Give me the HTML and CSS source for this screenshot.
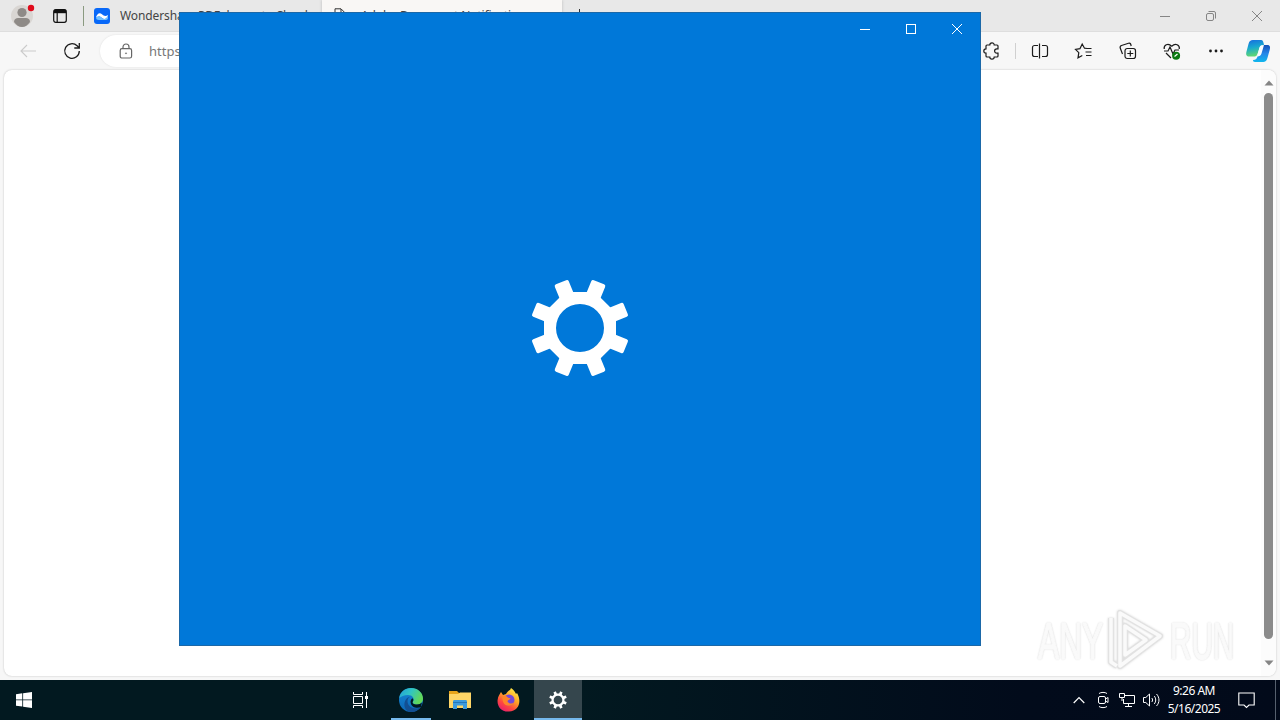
FILE: index.html
```html
<!DOCTYPE html>
<html lang="en">
<head>
<meta charset="utf-8">
<title>Desktop</title>
<link rel="stylesheet" href="styles.css">
</head>
<body>
<div class="desktop">
  <div class="browser">
    <div class="tabbar">
      <svg class="profile" width="26" height="28" viewBox="0 0 26 28"><circle cx="12" cy="16" r="11" fill="#d9d6d3"/><circle cx="12" cy="12.5" r="4.6" fill="#8e8a87"/><path d="M4 22c0-3 2-4 4-4h8c2 0 4 1 4 4-2 3-5 5-8 5s-6-2-8-5z" fill="#8e8a87"/><circle cx="21" cy="8" r="3.2" fill="#e00b1c"/></svg>
      <svg class="tabmenu" width="14" height="14" viewBox="0 0 14 14" fill="none" stroke="#111" stroke-width="1.2"><rect x=".7" y=".7" width="12.6" height="12.6" rx="2"/><path d="M1 2.5h12" stroke-width="3.4"/><path d="M4.2 4v9"/></svg>
      <span class="divider"></span>
      <svg class="favicon" width="16" height="16" viewBox="0 0 16 16"><rect width="16" height="16" rx="3" fill="#0868f8"/><path d="M2 9.500C3 5.500 5.500 4 8 6.200c2 1.800 3.500 2.300 6 .8-.5 3.500-3.500 5-6 3-2-1.600-3.500-2-6-.5z" fill="#fff"/><path d="M8 10c2.500 2 5.500.5 6-3v3c0 1.200-1 2-2 2H5c-2 0-3-.8-3-2.500 2.500-1.500 4-1.100 6 .5z" fill="#6fc0ff"/></svg>
      <span class="tabtitle first">Wondershare PDFelement - Cloud</span>
      <div class="activetab">
        <svg width="12" height="15" viewBox="0 0 12 15" fill="none" stroke="#333"><path d="M1 .8h6l4 4v9.500H1zM7 1v4h4"/></svg>
        <span class="tabtitle">Adobe Document Notification</span>
      </div>
      <svg class="newtab" width="12" height="14" viewBox="0 0 12 14" stroke="#333"><path d="M6.500 0v14M0 7.500h12"/></svg>
      <div class="syscaption">
        <svg width="12" height="12" viewBox="0 0 12 12" fill="none" stroke="#858585"><path d="M1 6.500h10"/></svg>
        <svg width="12" height="12" viewBox="0 0 12 12" fill="none" stroke="#858585"><rect x="1.500" y="3.500" width="7" height="7" rx="1.500"/><path d="M3.500 1.500H9a1.500 1.500 0 0 1 1.500 1.500v5.500"/></svg>
        <svg width="12" height="12" viewBox="0 0 12 12" fill="none" stroke="#858585"><path d="M1 1l10 10M11 1L1 11"/></svg>
      </div>
    </div>
    <div class="toolbar">
      <svg class="back" width="16" height="14" viewBox="0 0 16 14" fill="none" stroke="#cbcbcb" stroke-width="1.100"><path d="M16 7H1M7 1L1 7l6 6"/></svg>
      <svg class="reload" width="18" height="18" viewBox="0 0 18 18" fill="none" stroke="#1b1b1b" stroke-width="1.300"><path d="M16.300 9a7.300 7.300 0 1 1-2.200-5.200L16 5.600M16.300 1v5h-5"/></svg>
      <div class="address">
        <svg width="14" height="16" viewBox="0 0 14 16" fill="none" stroke="#666" stroke-width="1.200"><rect x="1.200" y="5.600" width="11.400" height="9.400" rx="1.800"/><path d="M4 5.500V4a3 3 0 0 1 6 0v1.500"/><circle cx="7" cy="10.300" r=".6" fill="#666" stroke-width=".5"/></svg>
        <span>https://</span>
      </div>
      <div class="actions">
        <svg width="20" height="20" viewBox="0 0 20 20" fill="none" stroke="#1b1b1b" stroke-width="1.200"><path d="M5 4h2.800a2.200 2.200 0 0 1 4.400 0H15a1 1 0 0 1 1 1v2.800h-1.200a2.200 2.200 0 0 0 0 4.400H16V15a1 1 0 0 1-1 1h-2.800a2.200 2.200 0 0 1-4.400 0H5a1 1 0 0 1-1-1v-2.800a2.200 2.200 0 0 1 0-4.400V5a1 1 0 0 1 1-1z"/></svg>
        <span class="sep"></span>
        <svg width="20" height="20" viewBox="0 0 20 20" fill="none" stroke="#1b1b1b" stroke-width="1.200"><path d="M8 4.500H4.500a2 2 0 0 0-2 2v7a2 2 0 0 0 2 2H8M12 4.500h3.500a2 2 0 0 1 2 2v7a2 2 0 0 1-2 2H12M9.500 2.500v15"/></svg>
        <svg width="20" height="20" viewBox="0 0 20 20" fill="none" stroke="#1b1b1b" stroke-width="1.200"><path d="M13 7.500l-2.500-.3L8.200 3 6 7.600l-4.500.8 3.300 3.300L4 16.800l4.300-2.300M11.500 7.500h6M11.500 11h6M12 14.500h5.500"/></svg>
        <svg width="20" height="20" viewBox="0 0 20 20" fill="none" stroke="#1b1b1b" stroke-width="1.200"><path d="M4.500 13L2.300 7.300C1.800 6 2.300 5 3.500 4.500l7-2.200c1.200-.4 2 .2 2.300 1.200l.4 1.500"/><rect x="7" y="7.500" width="10.500" height="10" rx="2.200"/><path d="M12.300 9.500v6M9.300 12.500h6"/></svg>
        <svg width="20" height="20" viewBox="0 0 20 20" fill="none" stroke="#1b1b1b" stroke-width="1.200"><path d="M2.200 8C1.500 4 6 1.500 9.700 5.200 13.500 1.500 18 4 17.300 8M4 12l5 5M2 10h4l2-4 3 7 2-4h4"/><circle cx="14.100" cy="14.800" r="4" fill="#0b7a12" stroke="none"/><path d="M12.500 15.500l3-2.500" stroke="#fff"/></svg>
        <svg width="20" height="20" viewBox="0 0 20 20" fill="#1b1b1b"><circle cx="4.500" cy="10" r="1.400"/><circle cx="10" cy="10" r="1.400"/><circle cx="15.500" cy="10" r="1.400"/></svg>
        <svg class="copilot" width="26" height="24" viewBox="0 0 26 24">
          <defs><linearGradient id="ca" x1="0" y1="0" x2=".2" y2="1"><stop offset="0" stop-color="#176be0"/><stop offset=".5" stop-color="#18a9cf"/><stop offset="1" stop-color="#5fd675"/></linearGradient><linearGradient id="cb" x1="0" y1="0" x2="0" y2="1"><stop offset="0" stop-color="#1450b8"/><stop offset=".5" stop-color="#2586e8"/><stop offset="1" stop-color="#10b7ed"/></linearGradient></defs>
          <path d="M18 6h4c3 0 3.500 2 2.800 4.500l-2.300 8.300C21.600 22 20.500 23 17.500 23H10c-1.500 0-2-1-2-2 3 0 4-1.500 4.800-4.500z" fill="url(#cb)"/>
          <path d="M8 1h8c2 0 2.500 2 3 5-3 0-4 1-5 4.500L12.500 15c-.7 2-1.800 2.500-4 2.500H4C1 17.500.8 15 1.500 12.500l2-7.500C4.300 2 5.500 1 8 1z" fill="url(#ca)"/>
          <path d="M14.500 8.500c.5-1.800 2-2.500 4.500-2.500l-2.500 8.500c-.5 2-2 3-4.500 3z" fill="#f8fcff"/>
        </svg>
      </div>
    </div>
    <div class="page">
      <div class="scrollbar">
        <svg width="10" height="6" viewBox="0 0 10 6"><path d="M.5 5.500L5 .5l4.500 5z" fill="#858585"/></svg>
        <div class="thumb"></div>
        <svg width="10" height="6" viewBox="0 0 10 6"><path d="M.5.500L5 5.500 9.500.500z" fill="#858585"/></svg>
      </div>
    </div>
  </div>

  <div class="settings">
    <div class="caption">
      <svg width="12" height="12" viewBox="0 0 12 12" fill="none" stroke="#fff"><path d="M1 6.500h10"/></svg>
      <svg width="12" height="12" viewBox="0 0 12 12" fill="none" stroke="#fff"><rect x="1.500" y="1.500" width="9" height="9"/></svg>
      <svg width="12" height="12" viewBox="0 0 12 12" fill="none" stroke="#fff"><path d="M1 1l10 10M11 1L1 11"/></svg>
    </div>
    <div class="splash">
      <svg width="98" height="98" viewBox="-49 -49 98 98">
        <defs><g id="gear"><path d="M-14.900-36h29.800L36-14.900v29.800L14.900 36h-29.800L-36 14.900v-29.800zM0-24a24 24 0 1 0 0 48 24 24 0 1 0 0-48z" fill-rule="evenodd"/>
          <g id="pair"><rect id="tooth" x="-7.500" y="-49.500" width="15" height="18" rx="2" transform="rotate(22.500)"/><use href="#tooth" transform="rotate(180)"/></g>
          <use href="#pair" transform="rotate(45)"/><use href="#pair" transform="rotate(90)"/><use href="#pair" transform="rotate(135)"/></g></defs>
        <use href="#gear" fill="#fff"/>
      </svg>
    </div>
  </div>

  <div class="watermark">
    <span class="any">ANY</span>
    <svg width="62" height="64" viewBox="0 0 62 64" fill="none" stroke-linejoin="round">
      <g stroke="#e2e2e2" stroke-width="6"><path d="M15 4l40 23-40 30zM20 17v29l21-15zM6 9v44l6 4"/></g>
      <g stroke="#fafafa" stroke-width="3.500"><path d="M15 4l40 23-40 30zM20 17v29l21-15zM6 9v44l6 4"/></g>
    </svg>
    <span class="run">RUN</span>
  </div>

  <div class="taskbar">
    <svg class="start" width="16" height="16" viewBox="0 0 16 16" fill="#fff"><path d="M0 2.200L6.300 1.300v6.200H0zM7.100 1.200L16 0v7.500H7.100zM0 8.300h6.300v6.200L0 13.700zM7.100 8.300H16V16l-8.900-1.300z"/></svg>
    <div class="apps">
      <div class="app first-app"><svg width="18" height="16" viewBox="0 0 18 16" fill="none" stroke="#fff"><path d="M1.500 0v2.500h9V0M1.500 16v-2.500h9V16M1.500 4.500h9v7h-9zM14.500 0v16"/><path d="M13 4h3v3h-3z" fill="#fff" stroke="none"/></svg></div>
      <div class="app running"><svg width="26" height="26" viewBox="0 0 26 26">
        <defs><linearGradient id="ea" x1="0" y1="0" x2="1" y2=".4"><stop offset="0" stop-color="#229ed9"/><stop offset=".5" stop-color="#30c5c4"/><stop offset="1" stop-color="#62d858"/></linearGradient><linearGradient id="eb" x1="0" y1="0" x2="0" y2="1"><stop offset="0" stop-color="#1686d5"/><stop offset="1" stop-color="#0c67b6"/></linearGradient></defs>
        <circle cx="13" cy="13" r="12" fill="url(#eb)"/>
        <path d="M1.200 11C2 5 7 1 13 1c7 0 12 5 12 10.500 0 4-3 6-6 6-3.500 0-5-1.500-4-3 2-3-.5-6.500-5-6.500-4 0-7 1.500-8.800 3z" fill="url(#ea)"/>
        <path d="M12.500 9.500C8 11 8 21 18 21.500c2 0 3.500-.6 4.900-1.500C20 24 16 25.500 12 25 4 23 5 11 12.500 9.500z" fill="#124f93"/>
        <path d="M14.500 11.200c1.500 1.300.8 2.600.2 3.500-.7 1.500 1 2.800 4.300 2.800 2 0 3.800-.7 4.900-2l-1 4.500c-3 1.500-9 1.300-10.200-4-.4-2 .3-4 1.800-4.800z" fill="#021920"/></svg></div>
      <div class="app"><svg width="22" height="20" viewBox="0 0 22 20"><path d="M0 1h8l2 2h11v4H0z" fill="#e8a51b"/><path d="M0 4h9l2-1.500h11V18H0z" fill="#ffd667"/><path d="M4 19v-7.500c0-1 .7-1.500 1.500-1.500h11c1 0 1.500.5 1.500 1.500V19h-4v-3.500H8V19z" fill="#3e9bdc"/><path d="M4 12.500h14" stroke="#2476b8"/></svg></div>
      <div class="app"><svg width="24" height="24" viewBox="0 0 24 24">
        <defs><linearGradient id="fa" x1=".8" y1="0" x2=".2" y2="1"><stop offset="0" stop-color="#fff04a"/><stop offset=".4" stop-color="#ffa526"/><stop offset=".7" stop-color="#ff483e"/><stop offset="1" stop-color="#e51a72"/></linearGradient></defs>
        <path d="M4 4l2 3 3-1c1-2 2-3 4-4l1-2c3 2 4 4 5 6l1-1c5 8 2 18-8 18.500C4 24 0 18 .6 12 1 8 3 6 4 4z" fill="url(#fa)"/><circle cx="12" cy="12" r="5.500" fill="#7548d8"/><path d="M5 9c2.500-1.500 5-1 6 .8l2.500.4c-.8 1.800-2.500 1.800-3 3C11 15 14 16.500 17 14.500c-2 5-10 4-11-1z" fill="#ff8528"/></svg></div>
      <div class="app running active"><svg width="18" height="18" viewBox="-50 -50 100 100"><use href="#gear" fill="#fff"/></svg></div>
    </div>
    <div class="tray">
      <svg width="12" height="8" viewBox="0 0 12 8" fill="none" stroke="#fff" stroke-width="1.200"><path d="M.7 7L6 1.500 11.300 7"/></svg>
      <svg class="meet" width="14" height="18" viewBox="0 0 14 18" fill="none" stroke="#fff"><rect x="2.500" y="5.500" width="7" height="7" rx="1.500"/><path d="M9.500 8l2.500-1.500v5L9.500 10M3 2.500c2-1.500 6-1.500 8 0M3 15.500c2 1.500 6 1.500 8 0"/></svg>
      <svg class="net" width="17" height="14" viewBox="0 0 17 14" fill="none" stroke="#fff"><path d="M6 2.500h9.500v8H4.500V6M9.500 10.500v3M6 13.500h7M.5.500h5v4h-5zM3 4.500V8"/></svg>
      <svg class="sound" width="17" height="14" viewBox="0 0 17 14" fill="none" stroke="#fff"><path d="M.5 4.500h2.300L6.500 1v12L2.800 9.500H.500zM8.800 5c1 1.200 1 2.800 0 4M11.200 3c2 2.200 2 5.800 0 8M13.500 1c3.300 3.500 3.300 8.500 0 12"/></svg>
      <div class="clock"><div>9:26 AM</div><div>5/16/2025</div></div>
      <svg class="note" width="17" height="17" viewBox="0 0 17 17" fill="none" stroke="#fff" stroke-width="1.100"><path d="M.8 1h15.400v12H11L8.500 15.500 6 13H.8z"/></svg>
    </div>
  </div>
</div>
</body>
</html>
```
FILE: styles.css
```css
* { box-sizing: border-box; }
body { margin: 0; overflow: hidden; font-family: "Noto Sans", "Open Sans", sans-serif; }
svg { display: block; flex: none; }
.desktop { width: 1280px; height: 720px; display: flex; flex-direction: column; position: relative; }
.browser { height: 680px; display: flex; flex-direction: column; background: #f7f7f7; }
.tabbar { height: 32px; flex: none; display: flex; align-items: center; background: #e8e8e8; border-bottom: 1px solid #dedede; }
.profile { margin: -3px 0 0 10px; }
.tabmenu { margin-left: 17px; }
.divider { width: 1px; height: 20px; margin-left: 16px; background: #8a9a80; }
.favicon { margin-left: 10px; }
.tabtitle { font-size: 12px; line-height: 16px; letter-spacing: -.1px; white-space: nowrap; color: #444; }
.first { width: 192px; margin-left: 10px; }
.activetab { width: 240px; height: 31px; margin-left: 10px; display: flex; align-items: center; gap: 15px; padding-left: 12px; background: #f9f7f5; box-shadow: 0 0 3px #bbb; }
.newtab { margin-left: 11px; }
.syscaption { margin-left: auto; display: flex; gap: 34px; padding-right: 17px; }
.toolbar { height: 37px; flex: none; display: flex; align-items: center; }
.back { margin-left: 20px; }
.reload { margin-left: 27px; }
.address { width: 870px; height: 32px; margin-left: 19px; padding-left: 19px; display: flex; align-items: center; gap: 16px; border-radius: 16px; background: #fff; box-shadow: 0 0 2px #ddd; font-size: 13px; color: #777; }
.actions { margin-left: 12px; display: flex; align-items: center; gap: 24px; }
.sep { width: 1px; height: 16px; margin: 0 -11px 0 -11px; background: #d0d0d0; }
.actions svg:nth-child(3) { margin-left: 1px; }
.copilot { margin-left: -5px; }
.page { height: 606px; margin: 1px 4px 0; display: flex; justify-content: flex-end; background: #fff; border-radius: 8px; box-shadow: 0 0 2px #bbb; }
.scrollbar { width: 15px; padding: 10px 0 10px; display: flex; flex-direction: column; align-items: center; gap: 7px; border-radius: 0 8px 8px 0; background: #fcfcfc; }
.thumb { width: 9px; height: 546px; border-radius: 5px; background: #8b8b8b; }
.scrollbar svg:last-child { margin-top: 14px; }
.settings { position: absolute; left: 179px; top: 12px; width: 802px; height: 634px; display: flex; flex-direction: column; background: #0078d9; border: 1px solid #1b68a8; }
.caption { height: 32px; flex: none; display: flex; justify-content: flex-end; align-items: center; gap: 34px; padding-right: 17px; }
.splash { flex: 1; display: flex; align-items: center; justify-content: center; padding-bottom: 34px; }
.watermark { position: absolute; left: 1038px; top: 609px; height: 64px; display: flex; align-items: center; gap: 3px; font: 400 52px/64px "Liberation Sans", sans-serif; color: #fafafa; -webkit-text-stroke: 1.5px #fafafa; text-shadow: 0 0 2px #c4c4c4, 0 0 3px #ddd; }
.watermark span { width: 64px; flex: none; transform-origin: left; }
.watermark svg { filter: drop-shadow(0 0 1px #d4d4d4); }
.any { transform: scaleX(.61); }
.run { transform: scaleX(.57); }
.taskbar { height: 40px; display: flex; align-items: center; background: linear-gradient(90deg, #021920 0%, #021920 45%, #020b1b 80%, #020a1a 100%); color: #fff; }
.start { margin-left: 16px; }
.apps { margin-left: 306px; display: flex; gap: 1px; }
.app { width: 48px; height: 40px; display: flex; align-items: center; justify-content: center; }
.first-app { padding-right: 3px; }
.running { background: linear-gradient(#76b9ed, #76b9ed) center bottom / 40px 2px no-repeat; }
.active { background-color: #35464d; background-size: 48px 2px; }
.tray { flex: 1; height: 40px; display: flex; align-items: center; margin-right: 4px; padding-left: 491px; border-right: 1px solid #56606e; }
.meet { margin-left: 11px; }
.net { margin-left: 9px; }
.sound { margin-left: 7px; }
.clock { width: 60px; margin-left: 4px; text-align: center; font-size: 12px; line-height: 18px; letter-spacing: -.5px; white-space: nowrap; }
.note { margin-left: 14px; }
```
